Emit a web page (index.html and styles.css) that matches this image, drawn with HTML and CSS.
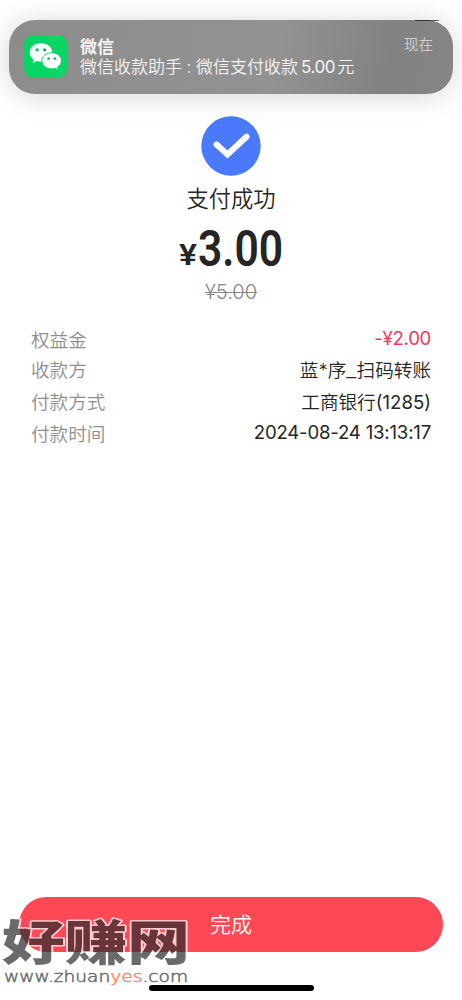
FILE: index.html
```html
<!DOCTYPE html>
<html lang="zh-CN">
<head>
    <meta charset="UTF-8">
    <meta name="viewport" content="width=device-width, initial-scale=1.0">
    <title>支付成功</title>
    <link rel="stylesheet" href="styles.css">
</head>
<body>
    <div class="page">

        <!-- 微信通知 -->
        <div class="notice">
            <svg class="notice-icon" viewBox="0 0 43 43">
                <rect width="43" height="43" rx="9" fill="#08d563"/>
                <path d="M17 8.200c-6.500 0-11.300 4.100-11.300 9.300 0 3 1.600 5.500 4.100 7.200l-1 3.200 3.900-1.900c1.400.4 2.800.6 4.300.6 6.400 0 11.300-4.200 11.300-9.200 0-5.100-4.900-9.200-11.300-9.200z" fill="#fff"/>
                <circle cx="13.100" cy="14.800" r="1.600" fill="#08b957"/>
                <circle cx="20.600" cy="14.800" r="1.600" fill="#08b957"/>
                <path d="M27.700 17.700c-5.400 0-9.900 3.600-9.900 8s4.500 8.200 9.900 8.200c1.200 0 2.300-.2 3.400-.5l3.200 1.700-.8-2.900c2.300-1.500 4-3.900 4-6.500 0-4.400-4.500-8-9.800-8z" fill="#fff" stroke="#08d563" stroke-width="1"/>
                <circle cx="24.600" cy="23.600" r="1.300" fill="#08b957"/>
                <circle cx="30.800" cy="23.600" r="1.300" fill="#08b957"/>
            </svg>
            <div class="notice-body">
                <div class="notice-title">微信</div>
                <div class="notice-text">微信收款助手<span class="colon">:</span>微信支付收款<span class="sum">5.00</span>元</div>
            </div>
            <div class="notice-time">现在</div>
            <div class="status-edge"></div>
        </div>

        <!-- 支付结果 -->
        <div class="result">
            <svg class="check" viewBox="0 0 60 60">
                <circle cx="30" cy="30" r="29.700" fill="#4a79fc"/>
                <path d="M15.500 28.500L26.500 38.500L45.500 20.800" fill="none" stroke="#fff" stroke-width="6" stroke-linecap="round" stroke-linejoin="miter"/>
            </svg>
            <div class="result-title">支付成功</div>
            <svg class="amount" viewBox="0 0 106 46">
                <text class="amount-sign" x="1" y="40" textLength="18" lengthAdjust="spacingAndGlyphs">¥</text>
                <text class="amount-num" x="20" y="41" textLength="85" lengthAdjust="spacingAndGlyphs">3.00</text>
            </svg>
            <div class="old-price">¥5.00</div>
        </div>

        <!-- 明细 -->
        <div class="details">
            <div class="row"><span class="label">权益金</span><span class="value discount">-¥2.00</span></div>
            <div class="row"><span class="label">收款方</span><span class="value">蓝*序<span class="dash">_</span>扫码转账</span></div>
            <div class="row"><span class="label">付款方式</span><span class="value">工商银行<span class="num">(1285)</span></span></div>
            <div class="row"><span class="label">付款时间</span><span class="value num date">2024-08-24 13:13:17</span></div>
        </div>

        <button class="done">完成</button>
        <div class="home-bar"></div>

        <!-- 水印 -->
        <div class="watermark">
            <svg class="mark-name" viewBox="0 0 194 50">
                <text x="2" y="41" textLength="188" lengthAdjust="spacingAndGlyphs">好赚网</text>
            </svg>
            <svg class="mark-url" viewBox="0 0 194 20">
                <text x="4" y="13" textLength="184" lengthAdjust="spacingAndGlyphs">www.zhuan<tspan class="mark-yes">yes</tspan>.com</text>
            </svg>
        </div>
    </div>
</body>
</html>
```

FILE: styles.css
```css
* {
    box-sizing: border-box;
}

body {
    margin: 0;
    background: #fff;
    font-family: Inter, "Noto Sans CJK SC", sans-serif;
    font-weight: 350;
    color: #252525;
}

.page {
    position: relative;
    display: flex;
    flex-direction: column;
    width: 462px;
    height: 1000px;
    padding-top: 20px;
    overflow: hidden;
}

/* 通知 */
.notice {
    position: relative;
    display: flex;
    flex-shrink: 0;
    height: 74px;
    margin: 0 9px;
    padding: 15px 20px 0 15px;
    border-radius: 26px;
    background: linear-gradient(100deg, #8c8c8c, #929292 60%, #828282 85%, #858585);
    box-shadow: 0 2px 28px rgba(0, 0, 0, 0.17);
    color: #f4f4f4;
}

.notice-icon {
    width: 43px;
    height: 43px;
}

.notice-body {
    flex: 1;
    margin-left: 13px;
    font-size: 17px;
    line-height: 20px;
    white-space: nowrap;
}

.notice-title {
    margin-top: 2px;
    font-weight: 600;
}

.colon {
    display: inline-block;
    width: 14px;
    text-align: center;
}

.sum {
    margin: 0 2px 0 3px;
    letter-spacing: -0.4px;
    font-weight: 400;
}

.notice-time {
    font-size: 14.5px;
    line-height: 19px;
    color: #cfcfcf;
}

/* 状态栏露出的一角 */
.status-edge {
    position: absolute;
    top: 0;
    right: 14px;
    width: 24px;
    height: 1px;
    background: linear-gradient(90deg, #333 50%, #777);
}

/* 支付结果 */
.result {
    display: flex;
    flex-direction: column;
    align-items: center;
    margin-top: 22px;
}

.check {
    width: 60px;
    height: 60px;
}

.result-title {
    margin-top: 7px;
    font-size: 22.3px;
    line-height: 32px;
}

.amount {
    width: 106px;
    height: 46px;
    margin-top: 10px;
    font-family: Roboto, sans-serif;
    font-weight: 600;
    fill: #252525;
    overflow: visible;
}

.amount-sign {
    font-size: 30px;
}

.amount-num {
    font-size: 49.5px;
}

.old-price {
    margin-top: 8px;
    font-size: 20px;
    line-height: 26px;
    font-weight: 300;
    color: #858585;
    text-decoration: line-through;
    text-decoration-thickness: 1px;
}

/* 明细 */
.details {
    display: grid;
    grid-template-rows: 30px 31px 32px 32px;
    margin: 18px 31px 0;
    font-size: 18.6px;
}

.row {
    display: flex;
    align-items: center;
    justify-content: space-between;
}

.label {
    color: #8e8e8e;
}

.discount {
    color: #eb3b5c;
    font-weight: 400;
    letter-spacing: -0.3px;
}

.dash {
    display: inline-block;
    transform: scaleX(1.2);
    margin: 0 1px;
}

.num {
    font-weight: 400;
}

.date {
    letter-spacing: -0.2px;
}

/* 按钮 */
.done {
    flex-shrink: 0;
    height: 55px;
    margin: auto 19px 33px;
    padding-bottom: 4px;
    border: none;
    border-radius: 28px;
    background: #ff4855;
    color: #fff;
    font-family: inherit;
    font-size: 21px;
    font-weight: 350;
}

.home-bar {
    flex-shrink: 0;
    width: 165px;
    height: 6px;
    margin: 0 auto 9px;
    border-radius: 3px;
    background: #000;
}

/* 水印 */
.watermark {
    position: absolute;
    left: 0;
    bottom: 11px;
    display: flex;
    flex-direction: column;
    width: 194px;
    opacity: 0.71;
    pointer-events: none;
    fill: #2e2e2e;
}

.mark-name {
    height: 50px;
    overflow: visible;
    font-family: "Noto Sans CJK SC", sans-serif;
    font-size: 48px;
    font-weight: 900;
    stroke: #fff;
    stroke-width: 3px;
    stroke-linejoin: round;
    paint-order: stroke;
}

.mark-url {
    height: 20px;
    overflow: visible;
    font-family: "DejaVu Sans", sans-serif;
    font-size: 15.5px;
    stroke: #2e2e2e;
    stroke-width: 0.5px;
}

.mark-yes {
    fill: #ff5128;
    stroke: #ff5128;
}
```
